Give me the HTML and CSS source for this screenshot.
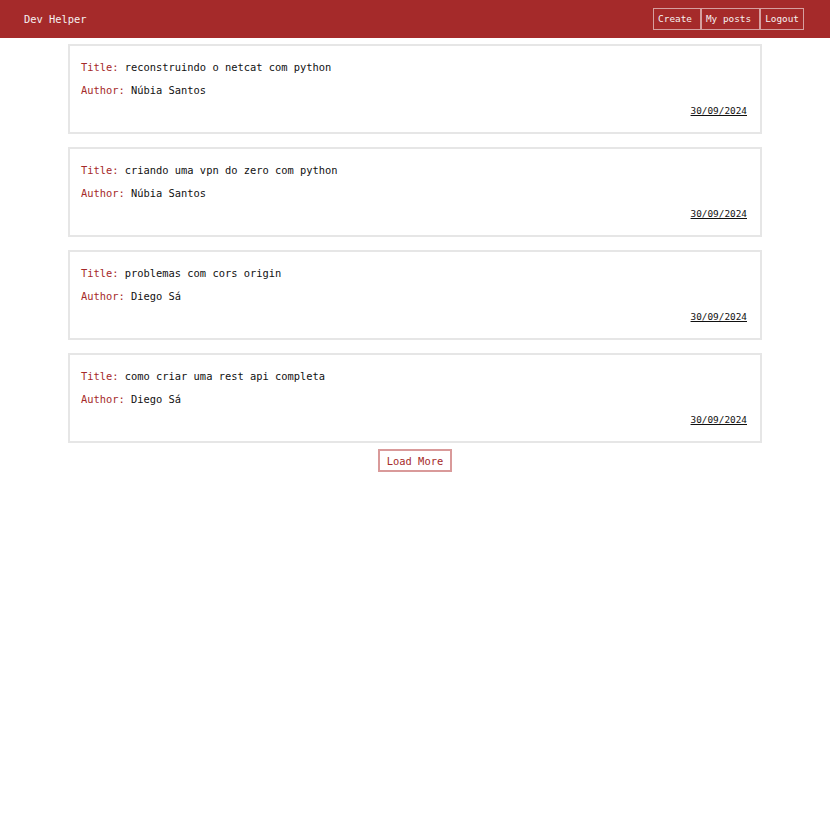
FILE: index.html
```html
<!DOCTYPE html>
<html>
<head>
<meta charset="utf-8">
<link rel="stylesheet" href="styles.css">
</head>
<body>
<header class="topbar">
  <span class="brand">Dev Helper</span>
  <nav class="nav">
    <a class="nav-btn nav-wide">Create</a>
    <a class="nav-btn nav-wide">My posts</a>
    <a class="nav-btn">Logout</a>
  </nav>
</header>
<main class="feed">
  <article class="card">
    <p class="line"><span class="label">Title:</span> reconstruindo o netcat com python</p>
    <p class="line"><span class="label">Author:</span> Núbia Santos</p>
    <p class="date"><a>30/09/2024</a></p>
  </article>
  <article class="card">
    <p class="line"><span class="label">Title:</span> criando uma vpn do zero com python</p>
    <p class="line"><span class="label">Author:</span> Núbia Santos</p>
    <p class="date"><a>30/09/2024</a></p>
  </article>
  <article class="card">
    <p class="line"><span class="label">Title:</span> problemas com cors origin</p>
    <p class="line"><span class="label">Author:</span> Diego Sá</p>
    <p class="date"><a>30/09/2024</a></p>
  </article>
  <article class="card">
    <p class="line"><span class="label">Title:</span> como criar uma rest api completa</p>
    <p class="line"><span class="label">Author:</span> Diego Sá</p>
    <p class="date"><a>30/09/2024</a></p>
  </article>
  <button class="load-more">Load More</button>
</main>
</body>
</html>
```
FILE: styles.css
```css
* { box-sizing: border-box; }
html, body {
  margin: 0;
  padding: 0;
  background: #fff;
  font-family: "DejaVu Sans Mono", monospace;
  font-size: 10.4px;
  color: #111;
}
.topbar {
  height: 38px;
  background: #a52a2a;
  display: flex;
  align-items: center;
  justify-content: space-between;
  padding: 0 26px 0 24px;
}
.brand {
  color: #f5f0f0;
  font-size: 10.4px;
}
.nav {
  display: flex;
}
.nav-btn {
  display: block;
  color: #f5f0f0;
  border: 1px solid rgba(255,255,255,0.55);
  height: 22px;
  line-height: 20px;
  padding: 0 4px;
  font-size: 9.4px;
}
.nav-wide { padding-right: 8px; }
.feed {
  display: flex;
  flex-direction: column;
  align-items: center;
  padding-top: 6px;
}
.card {
  width: 694px;
  border: 2px solid #e6e6e6;
  padding: 15px 13px 16px 11px;
  margin-bottom: 13px;
  display: flex;
  flex-direction: column;
}
.card:last-of-type { margin-bottom: 6px; }
.line {
  margin: 0 0 11px 0;
  line-height: 12px;
}
.label { color: #a52a2a; }
.date {
  margin: -2px 0 0 0;
  text-align: right;
  font-size: 9.4px;
  line-height: 11px;
}
.date a {
  color: #111;
  text-decoration: underline;
}
.load-more {
  font-family: "DejaVu Sans Mono", monospace;
  font-size: 10.4px;
  color: #a52a2a;
  background: #fff;
  border: 2px solid #d99a9a;
  height: 23px;
  padding: 0 7px;
}
```
